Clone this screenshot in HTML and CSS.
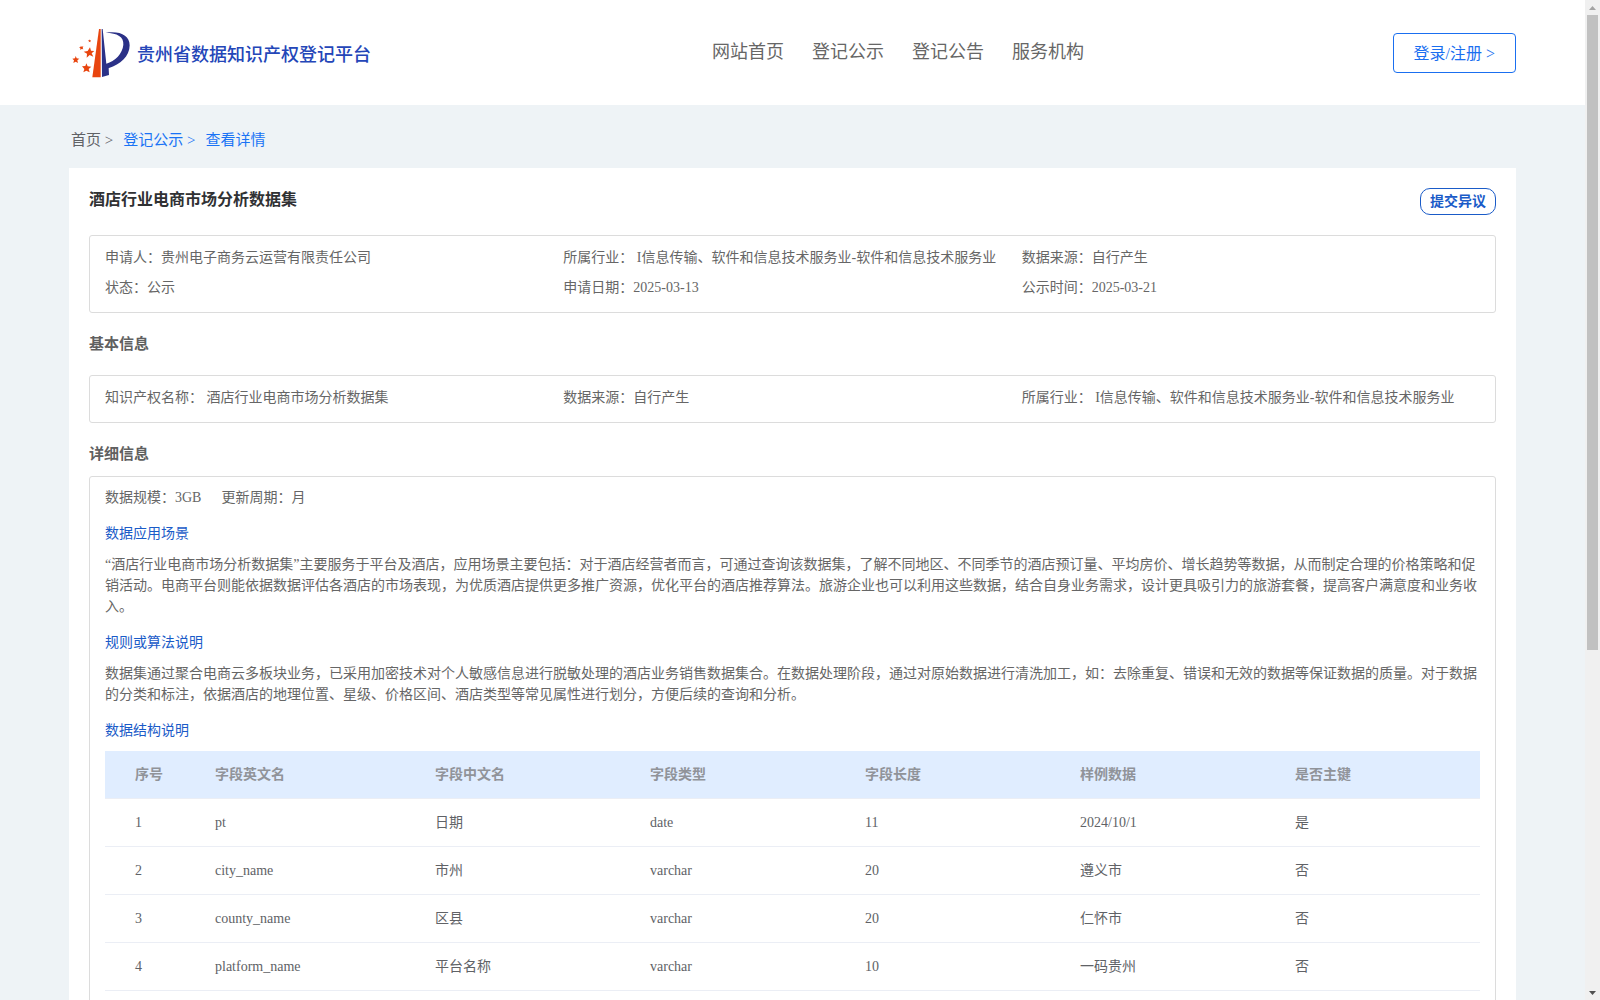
FILE: index.html
```html
<!DOCTYPE html>
<html lang="zh-CN">
<head>
<meta charset="utf-8">
<title>贵州省数据知识产权登记平台</title>
<link rel="stylesheet" href="styles.css">
</head>
<body>
<div class="page">
  <header class="site-header">
    <a class="brand" href="#">
      <svg class="brand-logo" viewBox="33 36 180 156" aria-hidden="true">
        <path fill="#e8450f" d="M117 42h5v145H97z"/>
        <path fill="#2b3187" d="M125 42h3l11 104c26-7 49-31 51-57 2-24-18-35-53-36 44-6 72 8 72 38 0 33-29 58-62 68l-1 1 1 20-21 6z"/>
        <g fill="#e8450f">
          <path d="M90 97l3 10 10 1-8 7 5 10-11-5-9 8 1-12-10-6 12-2z"/>
          <path d="M47 123l3 7 8 1-6 5 2 8-7-4-7 4 2-8-5-5 8-1z"/>
          <path d="M79 145l4 9 11 1-8 7 3 10-10-5-9 5 3-10-7-8 10-1z"/>
          <path d="M62 92l3 3 5-1-2 5 2 4-5-1-4 3v-5l-4-3 5-1z"/>
          <path d="M89 73l1 3h3l-2 3 1 3-3-2-3 2 1-3-3-3h4z"/>
        </g>
      </svg>
      <span class="brand-name">贵州省数据知识产权登记平台</span>
    </a>
    <nav class="main-nav">
      <a href="#">网站首页</a>
      <a href="#">登记公示</a>
      <a href="#">登记公告</a>
      <a href="#">服务机构</a>
    </nav>
    <button class="login" type="button">登录/注册 &gt;</button>
  </header>

  <main class="content">
    <nav class="crumbs">
      <a class="crumb-home" href="#">首页 &gt;</a>
      <a href="#">登记公示 &gt;</a>
      <a href="#">查看详情</a>
    </nav>

    <article class="card">
      <div class="card-head">
        <h1>酒店行业电商市场分析数据集</h1>
        <button class="objection" type="button">提交异议</button>
      </div>

      <div class="panel info-grid">
        <span>申请人：贵州电子商务云运营有限责任公司</span>
        <span>所属行业： I信息传输、软件和信息技术服务业-软件和信息技术服务业</span>
        <span>数据来源：自行产生</span>
        <span>状态：公示</span>
        <span>申请日期：2025-03-13</span>
        <span>公示时间：2025-03-21</span>
      </div>

      <h2>基本信息</h2>
      <div class="panel info-grid">
        <span>知识产权名称： 酒店行业电商市场分析数据集</span>
        <span>数据来源：自行产生</span>
        <span>所属行业： I信息传输、软件和信息技术服务业-软件和信息技术服务业</span>
      </div>

      <h2 class="detail-title">详细信息</h2>
      <section class="panel detail">
        <div class="facts"><span>数据规模：3GB</span><span>更新周期：月</span></div>
        <h3>数据应用场景</h3>
        <p>“酒店行业电商市场分析数据集”主要服务于平台及酒店，应用场景主要包括：对于酒店经营者而言，可通过查询该数据集，了解不同地区、不同季节的酒店预订量、平均房价、增长趋势等数据，从而制定合理的价格策略和促销活动。电商平台则能依据数据评估各酒店的市场表现，为优质酒店提供更多推广资源，优化平台的酒店推荐算法。旅游企业也可以利用这些数据，结合自身业务需求，设计更具吸引力的旅游套餐，提高客户满意度和业务收入。</p>
        <h3>规则或算法说明</h3>
        <p>数据集通过聚合电商云多板块业务，已采用加密技术对个人敏感信息进行脱敏处理的酒店业务销售数据集合。在数据处理阶段，通过对原始数据进行清洗加工，如：去除重复、错误和无效的数据等保证数据的质量。对于数据的分类和标注，依据酒店的地理位置、星级、价格区间、酒店类型等常见属性进行划分，方便后续的查询和分析。</p>
        <h3>数据结构说明</h3>
        <table class="fields">
          <thead>
            <tr><th class="col-index">序号</th><th class="col-name">字段英文名</th><th>字段中文名</th><th>字段类型</th><th>字段长度</th><th>样例数据</th><th>是否主键</th></tr>
          </thead>
          <tbody>
            <tr><td>1</td><td>pt</td><td>日期</td><td>date</td><td>11</td><td>2024/10/1</td><td>是</td></tr>
            <tr><td>2</td><td>city_name</td><td>市州</td><td>varchar</td><td>20</td><td>遵义市</td><td>否</td></tr>
            <tr><td>3</td><td>county_name</td><td>区县</td><td>varchar</td><td>20</td><td>仁怀市</td><td>否</td></tr>
            <tr><td>4</td><td>platform_name</td><td>平台名称</td><td>varchar</td><td>10</td><td>一码贵州</td><td>否</td></tr>
          </tbody>
        </table>
      </section>
    </article>
  </main>
</div>

<div class="scrollbar" aria-hidden="true">
  <svg class="arrow" viewBox="0 0 15 15"><path fill="#a3a3a3" d="M4 10l3.500-4 3.500 4z"/></svg>
  <div class="track"><div class="thumb"></div></div>
  <svg class="arrow" viewBox="0 0 15 15"><path fill="#505050" d="M4 6l3.500 4 3.500-4z"/></svg>
</div>
</body>
</html>
```
FILE: styles.css
```css
* { box-sizing: border-box; }

body {
  margin: 0;
  height: 100vh;
  overflow: hidden;
  display: flex;
  background: #eef3f6;
  color: #606266;
  font: 14px/21px "Liberation Serif", "Noto Sans CJK SC", serif;
  text-spacing-trim: space-all;
}

a { color: inherit; text-decoration: none; }
button { font-family: inherit; background: #fff; cursor: pointer; }
h1, h2, h3, p { margin: 0; }

.page {
  flex: 1;
  min-width: 0;
  display: flex;
  flex-direction: column;
}

/* Header */
.site-header {
  flex: none;
  height: 105px;
  padding: 0 69px;
  background: #fff;
  display: grid;
  grid-template-columns: 4fr 4fr 1fr;
  align-items: center;
}
.brand {
  display: flex;
  align-items: center;
  gap: 6px;
  padding-left: 2px;
  color: #2446b8;
}
.brand-logo { width: 60px; height: 52px; }
.brand-name { padding-top: 6px; font-size: 18px; font-weight: 500; }
.main-nav {
  display: flex;
  gap: 28px;
  font-size: 18px;
  color: #666;
  white-space: nowrap;
}
.login {
  justify-self: end;
  height: 40px;
  padding: 0 20px 2px;
  border: 1px solid #1a6ff0;
  border-radius: 4px;
  color: #1a6ff0;
  font-size: 16px;
  white-space: nowrap;
}

/* Body */
.content {
  flex: 1;
  min-height: 0;
  padding: 0 69px;
  display: flex;
  flex-direction: column;
}
.crumbs {
  display: flex;
  gap: 10px;
  padding: 25px 2px 17px;
  font-size: 15px;
  color: #1a73f5;
}
.crumb-home { color: #606266; }

.card {
  flex: 1;
  min-height: 0;
  padding: 20px 20px 0;
  background: #fff;
  display: flex;
  flex-direction: column;
  color: #666;
}
.card-head {
  display: flex;
  justify-content: space-between;
  align-items: flex-start;
  margin-bottom: 20px;
}
h1 { font-size: 16px; line-height: 24px; color: #303133; }
.objection {
  height: 27px;
  padding: 0 9px 3px;
  border: 1px solid #1a5bc8;
  border-radius: 10px;
  color: #1a5bc8;
  font-size: 14px;
  font-weight: 700;
}
h2 { margin: 20px 0; font-size: 15px; line-height: 22px; color: #606060; }
.detail-title { margin-bottom: 11px; }

.panel {
  border: 1px solid #dcdcdc;
  border-radius: 3px;
  padding: 0 15px;
}
.info-grid {
  display: grid;
  grid-template-columns: repeat(3, 1fr);
  padding-top: 7px;
  padding-bottom: 9px;
  line-height: 30px;
  white-space: nowrap;
}

.detail {
  flex: none;
  min-height: 600px;
  padding-top: 10px;
}
.facts { display: flex; gap: 20px; }
h3 {
  margin: 15px 0 10px;
  font-size: 14px;
  line-height: 21px;
  font-weight: 400;
  color: #1a5bc8;
}

.fields {
  width: 100%;
  table-layout: fixed;
  border-collapse: separate;
  border-spacing: 0;
  text-align: left;
  color: #606266;
}
.fields th, .fields td {
  height: 48px;
  padding: 0 0 0 30px;
  border-bottom: 1px solid #ebeef5;
}
.fields th { background: #e0edff; color: #909399; }
.col-index { width: 80px; }
.col-name { width: 220px; }

/* Scrollbar */
.scrollbar {
  flex: none;
  width: 15px;
  display: flex;
  flex-direction: column;
  background: #f0f0f0;
}
.arrow { width: 15px; height: 15px; display: block; }
.track { flex: 1; padding: 0 2px; }
.thumb { height: 65.5%; background: #c1c1c1; }
```
